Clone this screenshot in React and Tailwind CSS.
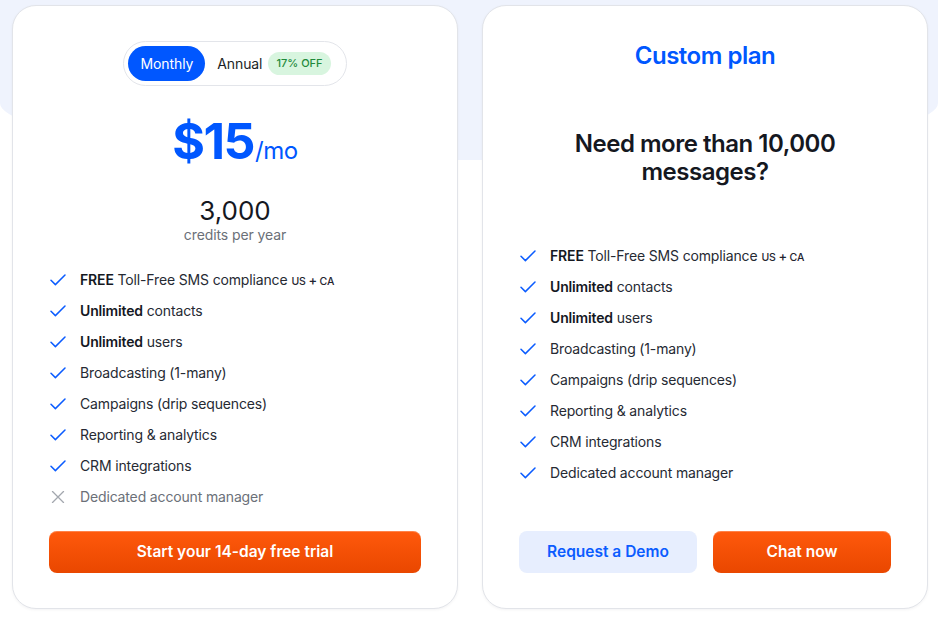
import React from "react";

const font = { fontFamily: "Inter, 'Noto Sans', sans-serif" };

function CheckIcon() {
  return (
    <svg width="16" height="12" viewBox="0 0 16 12" fill="none" className="shrink-0">
      <path d="M1 6.2 L5.4 10.6 L15 1" stroke="#0b5cff" strokeWidth="1.5" strokeLinecap="round" strokeLinejoin="round" />
    </svg>
  );
}

function CrossIcon() {
  return (
    <svg width="16" height="12" viewBox="0 0 16 12" fill="none" className="shrink-0">
      <path d="M2.5 0.5 L13.5 11.5 M13.5 0.5 L2.5 11.5" stroke="#a3a7ae" strokeWidth="1.3" strokeLinecap="round" />
    </svg>
  );
}

function Region() {
  return (
    <span className="ml-[4px] text-[10.5px] font-medium text-[#1f2430]">
      US <span className="text-[13px]">+</span> CA
    </span>
  );
}

const features = [
  { bold: "FREE", rest: " Toll-Free SMS compliance", region: true },
  { bold: "Unlimited", rest: " contacts" },
  { bold: "Unlimited", rest: " users" },
  { rest: "Broadcasting (1-many)" },
  { rest: "Campaigns (drip sequences)" },
  { rest: "Reporting & analytics" },
  { rest: "CRM integrations" },
  { rest: "Dedicated account manager", last: true },
];

function FeatureList({ lastIncluded }) {
  return (
    <ul className="flex flex-col pl-[1px]">
      {features.map((f, i) => {
        const off = f.last && !lastIncluded;
        return (
          <li key={i} className="flex h-[31px] items-center gap-[14px] text-[14px] tracking-[-0.15px]">
            {off ? <CrossIcon /> : <CheckIcon />}
            <span className={off ? "text-[#6b7078]" : "text-[#262a33]"}>
              {f.bold && <span className="font-semibold text-[#15181f]">{f.bold}</span>}
              {f.rest}
              {f.region && <Region />}
            </span>
          </li>
        );
      })}
    </ul>
  );
}

const orangeBtn =
  "flex h-[42px] items-center justify-center rounded-[8px] bg-gradient-to-b from-[#ff590c] to-[#e94700] text-[15.5px] font-semibold text-white shadow-[inset_0_1px_0_rgba(255,255,255,0.25)]";

export default function App() {
  return (
    <div className="relative h-[617px] w-[938px] overflow-hidden bg-white" style={font}>
      {/* curved tinted band behind the cards */}
      <div className="absolute left-0 top-0 h-[160px] w-full rounded-b-[50%_57px] bg-[#eff3fd]" />

      <div className="relative flex gap-[24px] pl-[12px] pt-[5px]">
        {/* Standard plan */}
        <div className="flex h-[604px] w-[446px] flex-col rounded-[24px] border border-[#e2e4e9] bg-white px-[36px] pt-[35px] shadow-[0_1px_3px_rgba(15,23,42,0.05)]">
          <div className="flex justify-center">
            <div className="flex h-[45px] items-center rounded-full border border-[#e3e5ea] bg-white pl-[4px] pr-[15px]">
              <span className="flex h-[35px] items-center rounded-full bg-[#0057ff] px-[12px] text-[14px] tracking-[-0.1px] text-white">Monthly</span>
              <span className="ml-[12px] text-[14px] tracking-[-0.1px] text-[#1c1f26]">Annual</span>
              <span className="ml-[6px] flex h-[23px] items-center rounded-full bg-[#d8f5df] px-[8px] text-[11px] font-medium text-[#1f8a3b]">17% OFF</span>
            </div>
          </div>

          <div className="mt-[25px] flex items-baseline justify-center text-[#0057ff]">
            <span className="text-[50px] font-bold leading-[60px] tracking-[-0.03em]">$15</span>
            <span className="ml-[1px] text-[24px] leading-[30px] tracking-[-0.02em]">/mo</span>
          </div>

          <div className="mt-[25px] flex flex-col items-center">
            <span className="text-[26px] leading-[30px] text-[#15181f]">3,000</span>
            <span className="text-[14px] leading-[18px] tracking-[-0.1px] text-[#6b7078]">credits per year</span>
          </div>

          <div className="mt-[20px]">
            <FeatureList lastIncluded={false} />
          </div>

          <button className={`mt-[19px] w-full ${orangeBtn}`}>Start your 14-day free trial</button>
        </div>

        {/* Custom plan */}
        <div className="flex h-[604px] w-[446px] flex-col rounded-[24px] border border-[#e2e4e9] bg-white px-[36px] pt-[34px] shadow-[0_1px_3px_rgba(15,23,42,0.05)]">
          <h2 className="text-center text-[24px] font-semibold leading-[32px] tracking-[-0.02em] text-[#0057ff]">Custom plan</h2>
          <h3 className="mt-[58px] text-center text-[24px] font-semibold leading-[28px] tracking-[-0.02em] text-[#15181f]">
            Need more than 10,000
            <br />
            messages?
          </h3>
          <div className="mt-[54px]">
            <FeatureList lastIncluded={true} />
          </div>
          <div className="mt-[43px] flex gap-[16px]">
            <button className="flex h-[42px] flex-1 items-center justify-center rounded-[8px] bg-[#e7eefe] text-[15.5px] font-semibold text-[#0b5cff]">
              Request a Demo
            </button>
            <button className={`flex-1 ${orangeBtn}`}>Chat now</button>
          </div>
        </div>
      </div>
    </div>
  );
}
